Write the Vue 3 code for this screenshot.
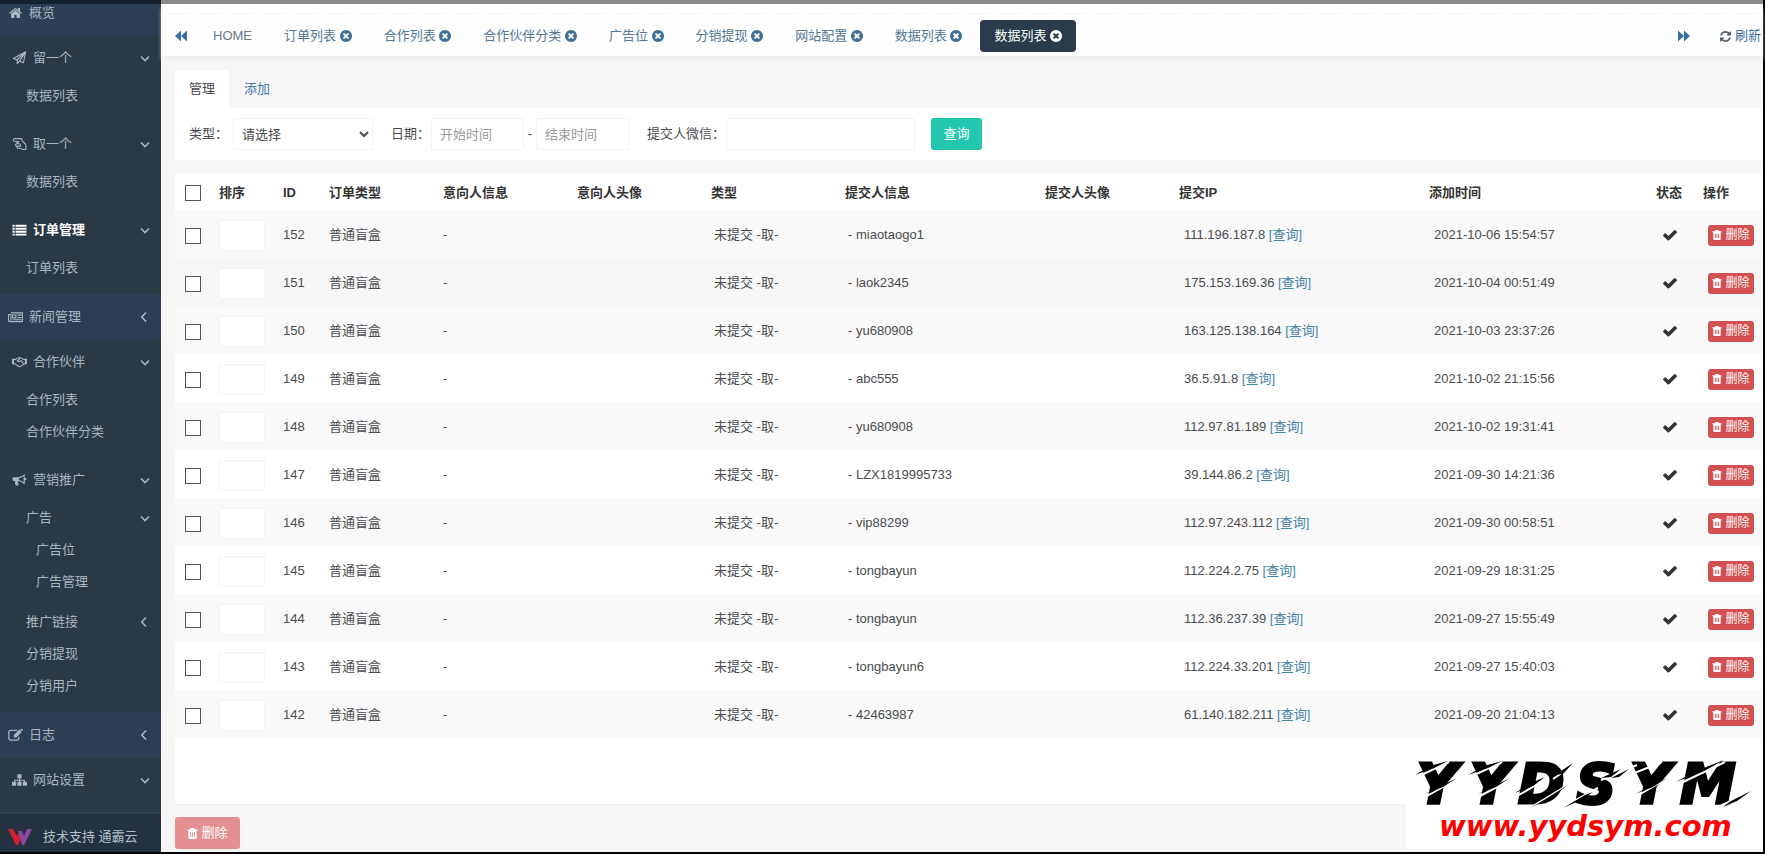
<script setup>
import { ref } from 'vue'

const menu = [
  { label: '概览', icon: 'home', kind: 'flat' },
  { label: '留一个', icon: 'plane', kind: 'group', arrow: 'down', children: [{ label: '数据列表' }] },
  { label: '取一个', icon: 'hand', kind: 'group', arrow: 'down', children: [{ label: '数据列表' }] },
  { label: '订单管理', icon: 'list', kind: 'group', arrow: 'down', active: true, children: [{ label: '订单列表' }] },
  { label: '新闻管理', icon: 'news', kind: 'flat', arrow: 'left' },
  { label: '合作伙伴', icon: 'shake', kind: 'group', arrow: 'down', children: [{ label: '合作列表' }, { label: '合作伙伴分类' }] },
  {
    label: '营销推广', icon: 'horn', kind: 'group', arrow: 'down',
    children: [
      { label: '广告', arrow: 'down', children: ['广告位', '广告管理'] },
      { label: '推广链接', arrow: 'left' },
      { label: '分销提现' },
      { label: '分销用户' }
    ]
  },
  { label: '日志', icon: 'edit', kind: 'flat', arrow: 'left' },
  { label: '网站设置', icon: 'sitemap', kind: 'group', arrow: 'down' }
]

const tabs = ['订单列表', '合作列表', '合作伙伴分类', '广告位', '分销提现', '网站配置', '数据列表', '数据列表']

const columns = [
  ['排序', 64], ['ID', 46], ['订单类型', 114], ['意向人信息', 134], ['意向人头像', 134], ['类型', 134],
  ['提交人信息', 200], ['提交人头像', 134], ['提交IP', 250], ['添加时间', 227], ['状态', 47], ['操作', 68]
]

const rows = [
  [152, 'miaotaogo1', '111.196.187.8', '2021-10-06 15:54:57'],
  [151, 'laok2345', '175.153.169.36', '2021-10-04 00:51:49'],
  [150, 'yu680908', '163.125.138.164', '2021-10-03 23:37:26'],
  [149, 'abc555', '36.5.91.8', '2021-10-02 21:15:56'],
  [148, 'yu680908', '112.97.81.189', '2021-10-02 19:31:41'],
  [147, 'LZX1819995733', '39.144.86.2', '2021-09-30 14:21:36'],
  [146, 'vip88299', '112.97.243.112', '2021-09-30 00:58:51'],
  [145, 'tongbayun', '112.224.2.75', '2021-09-29 18:31:25'],
  [144, 'tongbayun', '112.36.237.39', '2021-09-27 15:55:49'],
  [143, 'tongbayun6', '112.224.33.201', '2021-09-27 15:40:03'],
  [142, '42463987', '61.140.182.211', '2021-09-20 21:04:13']
]
const current = ref(151)
</script>

<template>
  <svg class="sprite" aria-hidden="true">
    <symbol id="home" viewBox="0 0 1792 1792"><path fill="currentColor" d="M1472 992v480q0 26-19 45t-45 19h-384v-384h-256v384h-384q-26 0-45-19t-19-45v-480q0-1 .5-3t.5-3l575-474 575 474q1 2 1 6zm223-69l-62 74q-8 9-21 11h-3q-13 0-21-7l-692-577-692 577q-12 8-24 7-13-2-21-11l-62-74q-8-10-7-23.500t11-21.500l719-599q32-26 76-26t76 26l244 204v-195q0-14 9-23t23-9h192q14 0 23 9t9 23v408l219 182q10 8 11 21.500t-7 23.500z" /></symbol>
    <symbol id="plane" viewBox="0 0 16 16"><path fill="none" stroke="currentColor" stroke-width="1.3" stroke-linejoin="round" d="M15 1 1 8.500l4 1.800L15 1 12.500 13.500 8 11.500l-2.500 3v-4M15 1 8 11.500" /></symbol>
    <symbol id="hand" viewBox="0 0 18 16"><path fill="none" stroke="currentColor" stroke-width="1.300" stroke-linejoin="round" stroke-linecap="round" d="M3 1.500h8.500l1 3 3.500 3.500q1.500 2.500.5 6.500h-4l-2-1.500H7q-2-1-.5-2.500H5q-1.500-1 0-2.700L8.500 7.500M3 1.500q-2.500 1-.5 3.200L8.500 5M4.500 5l5.500 3.500v2H7" /></symbol>
    <symbol id="list" viewBox="0 0 16 16"><path fill="currentColor" d="M0 2h2.500v2.200H0zM3.500 2H16v2.200H3.500zM0 5.400h2.500v2.200H0zM3.500 5.400H16v2.200H3.500zM0 8.800h2.500V11H0zM3.500 8.800H16V11H3.500zM0 12.200h2.500v2.200H0zM3.500 12.200H16v2.200H3.500z" /></symbol>
    <symbol id="news" viewBox="0 0 18 16"><path fill="none" stroke="currentColor" stroke-width="1.300" d="M3.500 3h13.800v10.500H2Q.7 13.500.7 12V5h2.800v7.500M5.500 5.500h4v3.500h-4zM11.500 5.700H16M11.500 8.700H16M5.500 11.300H16" /></symbol>
    <symbol id="shake" viewBox="0 0 20 16"><path fill="none" stroke="currentColor" stroke-width="1.500" stroke-linejoin="round" d="M2.500 4.500h2.500l3-2h4l3 2h2.500M2.500 10.500h1.500l5 3.500q1.500.5 3-.5l4.500-3h1M10.500 4 7 6.500q1.500 2 3.500.5l1.500-.7 3.500 4" /><path fill="currentColor" d="M0 3.500h2.800v7.500H0zM17.200 3.500H20v7.500h-2.800z" /></symbol>
    <symbol id="horn" viewBox="0 0 16 16"><path fill="currentColor" fill-rule="evenodd" d="M14 1v4.500q2 .3 2 1.500t-2 1.500V13q-4-3.500-7.500-3.800-1 .8 0 2-.6 1 .8 2-1.500 1.800-3.800.8-1-2.700-.7-4.800H1.500Q0 9 0 7.500V6.300Q0 4.800 1.500 4.800H6Q10 4.700 14 1zm-1.300 2.500Q10 5.500 7.300 6v2q2.700.4 5.400 2.500z" /></symbol>
    <symbol id="edit" viewBox="0 0 18 16"><path fill="none" stroke="currentColor" stroke-width="1.500" d="M11 2.500H3Q1 2.500 1 4.500v7.500q0 2 2 2h8q2 0 2-2v-2" /><path fill="currentColor" d="m13.500 1.500 3 3L10 11H7V8zM15.200.7q.8-.7 1.500 0l.8.8q.7.8 0 1.500l-.6.600-2.300-2.300z" /></symbol>
    <symbol id="sitemap" viewBox="0 0 18 16"><path fill="currentColor" d="M6.500 1h5v5H9.700v1.700h5.800V10H18v5h-5v-5h1.200V9H9.700v1h1.800v5h-5v-5h1.800V9H3.800v1H5v5H0v-5h2.500V7.700h5.800V6H6.500z" /></symbol>
    <symbol id="down" viewBox="0 0 12 12"><path fill="none" stroke="currentColor" stroke-width="1.600" d="M2 4.500 6 8.500l4-4" /></symbol>
    <symbol id="left" viewBox="0 0 12 12"><path fill="none" stroke="currentColor" stroke-width="1.600" d="M7 1.500 2.800 6 7 10.500" /></symbol>
    <symbol id="close" viewBox="128 128 1536 1536"><path fill="currentColor" d="M1277 1122q0-26-19-45l-181-181 181-181q19-19 19-45 0-27-19-46l-90-90q-19-19-46-19-26 0-45 19l-181 181-181-181q-19-19-45-19-27 0-46 19l-90 90q-19 19-19 46 0 26 19 45l181 181-181 181q-19 19-19 45 0 27 19 46l90 90q19 19 46 19 26 0 45-19l181-181 181 181q19 19 45 19 27 0 46-19l90-90q19-19 19-46zm387-226q0 209-103 385.500t-279.500 279.500-385.500 103-385.500-103-279.500-279.500-103-385.500 103-385.500 279.500-279.500 385.500-103 385.500 103 279.500 279.500 103 385.500z" /></symbol>
    <symbol id="check" viewBox="0 0 1792 1792"><path fill="currentColor" d="M1671 566q0 40-28 68l-724 724-136 136q-28 28-68 28t-68-28l-136-136-362-362q-28-28-28-68t28-68l136-136q28-28 68-28t68 28l294 295 656-657q28-28 68-28t68 28l136 136q28 28 28 68z" /></symbol>
    <symbol id="refresh" viewBox="128 128 1536 1536"><path fill="currentColor" d="M1639 1056q0 5-1 7-64 268-268 434.500t-478 166.500q-146 0-282.500-55t-243.500-157l-129 129q-19 19-45 19t-45-19-19-45v-448q0-26 19-45t45-19h448q26 0 45 19t19 45-19 45l-137 137q71 66 161 102t187 36q134 0 250-65t186-179q11-17 53-117 8-23 30-23h192q13 0 22.500 9.500t9.500 22.500zm25-800v448q0 26-19 45t-45 19h-448q-26 0-45-19t-19-45 19-45l138-138q-148-137-349-137-134 0-250 65t-186 179q-11 17-53 117-8 23-30 23h-199q-13 0-22.500-9.500t-9.500-22.500v-7q65-268 270-434.500t480-166.500q146 0 284 55.500t245 156.500l130-129q19-19 45-19t45 19 19 45z" /></symbol>
    <symbol id="back" viewBox="0 0 12 12"><path fill="currentColor" d="M6 .5v11L0 6zM12 .5v11L6 6z" /></symbol>
    <symbol id="forward" viewBox="0 0 12 12"><path fill="currentColor" d="M0 .5v11L6 6zM6 .5v11L12 6z" /></symbol>
    <symbol id="trash" viewBox="0 0 12 12"><path fill="currentColor" fill-rule="evenodd" d="M4 0h4l.6 1.500H11.500V3h-1v7.500q0 1.500-1.500 1.500H3q-1.500 0-1.500-1.500V3h-1V1.500h2.900zM3.500 4.500v5h1v-5zM5.500 4.500v5h1v-5zM7.500 4.500v5h1v-5z" /></symbol>
  </svg>

  <div class="page">
    <aside class="side">
      <nav>
        <div v-for="item in menu" :key="item.label" :class="['block', item.kind]">
          <a href="#" :class="['top', { on: item.active }]">
            <svg class="ico"><use :href="'#' + item.icon" /></svg>
            <span>{{ item.label }}</span>
            <svg v-if="item.arrow" class="arrow"><use :href="'#' + item.arrow" /></svg>
          </a>
          <ul v-if="item.children">
            <li v-for="child in item.children" :key="child.label">
              <a href="#" class="sub">
                <span>{{ child.label }}</span>
                <svg v-if="child.arrow" class="arrow"><use :href="'#' + child.arrow" /></svg>
              </a>
              <ul v-if="child.children" class="deep">
                <li v-for="leaf in child.children" :key="leaf"><a href="#" class="sub">{{ leaf }}</a></li>
              </ul>
            </li>
          </ul>
        </div>
      </nav>
      <footer class="support">
        <svg class="mark" viewBox="0 0 24 16">
          <path fill="#d3202f" d="M0 0h5l4 7 2-4 3 5-4 8H8z" />
          <path fill="#8a4a9c" d="M10 2h4l2 5 3-7h5l-8 16h-2z" />
        </svg>
        <span>技术支持 通霸云</span>
      </footer>
    </aside>

    <main class="main">
      <header class="bar">
        <button class="step" aria-label="向左"><svg><use href="#back" /></svg></button>
        <div class="tabs">
          <a href="#" class="tab home">HOME</a>
          <a v-for="(tab, i) in tabs" :key="i" href="#" :class="['tab', { on: i === tabs.length - 1 }]">
            {{ tab }} <svg><use href="#close" /></svg>
          </a>
        </div>
        <button class="step" aria-label="向右"><svg><use href="#forward" /></svg></button>
        <a href="#" class="reload"><svg><use href="#refresh" /></svg>刷新</a>
      </header>

      <section class="content">
        <div class="pills">
          <a href="#" class="pill on">管理</a>
          <a href="#" class="pill">添加</a>
        </div>
        <form class="filter" @submit.prevent>
          <label for="type">类型：</label>
          <select id="type" class="field type"><option>请选择</option></select>
          <label for="from">日期：</label>
          <input id="from" class="field date" placeholder="开始时间">
          <span class="dash">-</span>
          <input id="to" class="field date" placeholder="结束时间" aria-label="结束时间">
          <label for="wx">提交人微信：</label>
          <input id="wx" class="field wx">
          <button class="search">查询</button>
        </form>

        <div class="sheet">
          <table>
            <colgroup>
              <col :style="{ width: '36px' }">
              <col v-for="c in columns" :key="c[0]" :style="{ width: c[1] + 'px' }">
            </colgroup>
            <thead>
              <tr>
                <th class="tick"><input type="checkbox" aria-label="全选"></th>
                <th v-for="c in columns" :key="c[0]">{{ c[0] }}</th>
              </tr>
            </thead>
            <tbody>
              <tr v-for="r in rows" :key="r[0]" :class="{ current: r[0] === current }">
                <td class="tick"><input type="checkbox" :aria-label="'选择 ' + r[0]"></td>
                <td><input class="sort" :aria-label="'排序 ' + r[0]"></td>
                <td>{{ r[0] }}</td>
                <td>普通盲盒</td>
                <td>-</td>
                <td></td>
                <td class="near">未提交 -取-</td>
                <td class="near">- {{ r[1] }}</td>
                <td></td>
                <td class="in">{{ r[2] }} <a href="#">[查询]</a></td>
                <td class="in">{{ r[3] }}</td>
                <td class="state"><svg><use href="#check" /></svg></td>
                <td class="in"><button class="del"><svg><use href="#trash" /></svg>删除</button></td>
              </tr>
            </tbody>
          </table>
        </div>
        <div class="foot">
          <button class="bulk" disabled><svg><use href="#trash" /></svg>删除</button>
        </div>
      </section>

      <div class="stamp">
        <svg class="word" viewBox="0 0 344 57">
          <text x="2 55 103 161 215 265" y="48">YYDSYM</text>
          <g stroke="#fff" stroke-width="2" fill="none">
            <path d="M2 22 34 7M12 41 46 22M55 22 87 7M65 41 99 23M102 41 130 25M138 24 160 9M118 51 156 28M150 51 183 33M186 25 222 10M212 21 247 7M222 41 255 22M264 29 310 7M305 51 336 37" />
          </g>
          <g fill="#000">
            <path d="m0 20 15-9 18-5-14 7zM53 20l16-9 18-5-14 7zM10 39l12-6 20-10-14 9zM63 39l12-6 20-10-14 9zM100 38l16-10 14-6-12 9zM140 20l18-12-10 11zM115 53l14-8 24-15-16 12zM148 53l22-13 8-3-10 7zM186 23l20-9-10 8zM196 23l18-9-10 8zM220 39l12-6 20-10-14 9zM261 27l20-11 28-11-18 10zM308 52l8-6 20-10-14 10z" />
          </g>
        </svg>
        <div class="url">www.yydsym.com</div>
      </div>
    </main>
  </div>
</template>

<style>
body { background: #000; }
</style>

<style scoped>
* { box-sizing: border-box; }
.sprite { position: absolute; width: 0; height: 0; }
.page {
  display: flex;
  min-height: 100vh;
  border-right: 2px solid #000;
  border-bottom: 2px solid #000;
  font: 13px/20px "Liberation Sans", "Noto Sans CJK SC", sans-serif;
  color: #4a4c4e;
}
a { color: inherit; text-decoration: none; }
button, input, select { font: inherit; }
button { border: 0; padding: 0; cursor: pointer; }
ul { list-style: none; margin: 0; padding: 0; }

.side {
  display: flex;
  flex-direction: column;
  flex: none;
  width: 161px;
  border-top: 4px solid #15202f;
  background: #2b3945;
  color: #a9b6c2;
}
.top { display: flex; align-items: center; height: 44px; padding: 0 10px 0 12px; gap: 6px; }
.top.on { color: #fff; font-weight: bold; }
.top.on .arrow { color: #a9b6c2; }
.group { padding-bottom: 10px; }
.flat { background: #2d3d53; }
.flat .top { height: 46px; padding-left: 8px; gap: 6px; }
.flat:first-child .top { height: 32px; padding-bottom: 14px; }
.ico { width: 15px; height: 14px; flex: none; }
.arrow { width: 12px; height: 12px; margin-left: auto; }
.sub { display: flex; align-items: center; height: 32px; padding: 0 10px 0 26px; }
.deep { padding-bottom: 8px; }
.deep .sub { padding-left: 36px; }
.support {
  display: flex;
  align-items: center;
  flex: 1;
  gap: 11px;
  padding: 8px 8px 0;
  border-top: 2px solid #2f4150;
  background: #233140;
  color: #b4c0cb;
}
.mark { width: 24px; height: 16px; }

.main { position: relative; display: flex; flex-direction: column; flex: 1; min-width: 0; border-top: 4px solid #8a8b89; background: #f6f6f6; }
.bar {
  display: flex;
  align-items: center;
  height: 52px;
  padding: 12px 2px 0 14px;
  background:
    repeating-linear-gradient(90deg, #f1f2ef 0 18px, transparent 18px 32px) 9px 9px / 100% 1px no-repeat,
    #fefefe;
  box-shadow: 0 4px 4px -1px #efefef;
  color: #537795;
}
.step { display: flex; background: none; color: #39709f; }
.step svg { width: 12px; height: 12px; }
.tabs { display: flex; flex: 1; gap: 4px; margin-left: 12px; }
.tab { height: 32px; padding: 0 14px; border-radius: 4px; line-height: 32px; white-space: nowrap; }
.tab svg { width: 12px; height: 12px; vertical-align: -2px; color: #3f7196; }
.home { color: #68798a; }
.tab.on, .tab.on svg { color: #fff; }
.tab.on { background: #2b3b4b; }
.reload { display: flex; align-items: center; gap: 4px; margin-left: 30px; color: #39709f; }
.reload svg { width: 11px; height: 11px; color: #56636e; }

.content { display: flex; flex-direction: column; flex: 1; padding: 14px 0 0 14px; }
.pills { display: flex; gap: 1px; }
.pill { padding: 9px 14px; border-radius: 4px 4px 0 0; color: #4779a6; }
.pill.on { background: #fff; color: #4a4c4e; }
.filter { display: flex; align-items: center; height: 52px; padding: 0 14px; margin-bottom: 13px; background: #fff; white-space: nowrap; }
.field { height: 32px; padding: 0 8px; border: 1px solid #f3f3f3; border-radius: 2px; background: #fff; color: #4a4c4e; outline: 0; }
.field::placeholder { color: #999; opacity: 1; }
.type { width: 140px; margin: 0 18px 0 5px; padding: 0 4px; }
.date { width: 93px; }
.filter label + .date { margin-left: 1px; }
.dash { width: 12px; text-align: center; }
.date + label { margin-left: 18px; }
.wx { width: 189px; margin-left: 1px; }
.search { width: 51px; height: 32px; margin-left: 16px; border-radius: 3px; background: #22c7ae; color: #fff; }

.sheet { background: #fff; padding-bottom: 65px; border-bottom: 1px solid #efefef; }
table { width: 100%; table-layout: fixed; border-collapse: collapse; }
th { height: 38px; padding: 2px 0 0 8px; text-align: left; color: #333; white-space: nowrap; }
td { height: 48px; padding: 0 0 0 8px; white-space: nowrap; }
td.near { padding-left: 11px; }
td.in { padding-left: 13px; }
.tick { padding-left: 10px; }
.tick input { display: block; appearance: none; width: 16px; height: 16px; margin: 2px 0 0; border: 1px solid #555; background: #fff; }
th.tick { padding-top: 0; }
tbody tr:nth-child(odd) { background: #f9f9f9; }
tbody tr.current { background: #f7f7f7; }
.sort { display: block; width: 46px; height: 31px; border: 1px solid #f3f3f3; border-radius: 2px; background: #fff; outline: 0; }
td a { color: #4684a8; }
.state { padding-left: 14px; }
.state svg { display: block; width: 16px; height: 16px; color: #333; }
.del, .bulk { display: flex; align-items: center; justify-content: center; gap: 3px; border-radius: 3px; color: #fff; }
.del { width: 46px; height: 21px; background: #d2504f; font-size: 12px; }
.del svg { width: 10px; height: 10px; }
.foot { padding: 12px 0 3px; }
.bulk { width: 65px; height: 32px; background: #e59090; }
.bulk svg { width: 11px; height: 11px; }

.stamp { position: absolute; right: 0; bottom: 3px; width: 357px; height: 94px; padding-left: 9px; background: #fff; }
.word { display: block; width: 344px; height: 57px; overflow: visible; }
.word text { font: italic 700 56px "DejaVu Sans", sans-serif; fill: #000; stroke: #000; stroke-width: 3px; }
.url { padding-left: 24px; font: italic 700 29px/28px "DejaVu Sans", sans-serif; color: #f00; }
</style>
